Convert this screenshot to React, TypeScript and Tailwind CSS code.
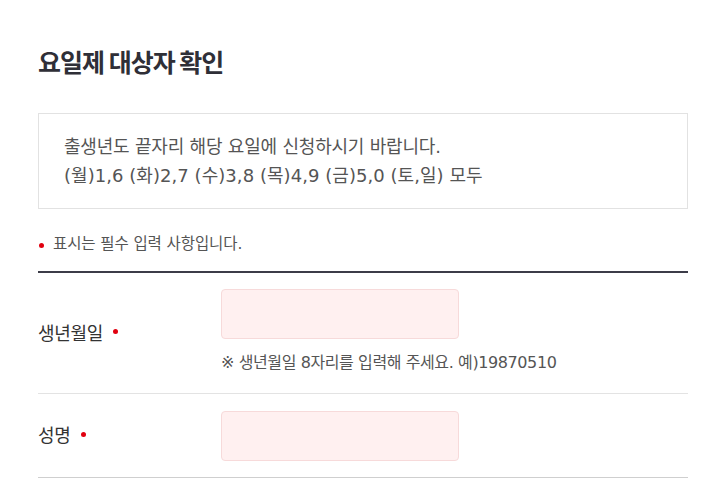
import React from "react";

const Dot = ({ className = "" }: { className?: string }) => (
  <span className={`inline-block w-[5px] h-[5px] rounded-full bg-[#e1000f] ${className}`} />
);

export default function App() {
  return (
    <div
      className="w-[708px] h-[479px] bg-white overflow-hidden"
      style={{ fontFamily: '"DejaVu Sans", "Noto Sans CJK KR", sans-serif' }}
    >
      <div className="ml-[38px] w-[650px] pt-[43px]">
        <h1
          className="text-[25px] leading-[36px] font-bold text-[#2f2f37] tracking-[-1px]"
          style={{ fontFamily: '"Noto Sans CJK KR", sans-serif' }}
        >
          요일제 대상자 확인
        </h1>

        <div className="mt-[34px] border border-[#e2e2e2] h-[96px] px-[25px] pt-[18px] text-[18px] leading-[29px] text-[#555]">
          <div className="tracking-[-0.2px]">출생년도 끝자리 해당 요일에 신청하시기 바랍니다.</div>
          <div className="tracking-[0.05px]">(월)1,6 (화)2,7 (수)3,8 (목)4,9 (금)5,0 (토,일) 모두</div>
        </div>

        <div className="mt-[25px] flex items-center h-[22px] text-[15.5px] text-[#555] tracking-[-0.1px]">
          <Dot className="ml-[1px] mr-[9px]" />
          <span>표시는 필수 입력 사항입니다.</span>
        </div>

        <div className="mt-[15px] h-[2px] bg-[#3c3c48]" />

        <div className="flex items-center border-b border-[#e3e3e3]">
          <div className="w-[183px] flex items-center text-[18px] text-[#333] tracking-[-0.3px]">
            <span>생년월일</span>
            <Dot className="ml-[10px] -mt-[3px]" />
          </div>
          <div className="pt-[16px] pb-[18px]">
            <div className="w-[238px] h-[50px] rounded-[4px] bg-[#fff0f0] border border-[#f7dada]" />
            <div className="mt-[12px] text-[16px] leading-[24px] text-[#555] tracking-[-0.4px]">
              ※ 생년월일 8자리를 입력해 주세요. 예)19870510
            </div>
          </div>
        </div>

        <div className="flex items-center border-b border-[#cfcfcf]">
          <div className="w-[183px] flex items-center text-[18px] text-[#333] tracking-[-0.3px]">
            <span>성명</span>
            <Dot className="ml-[10px] -mt-[3px]" />
          </div>
          <div className="pt-[17px] pb-[16px]">
            <div className="w-[238px] h-[50px] rounded-[4px] bg-[#fff0f0] border border-[#f7dada]" />
          </div>
        </div>
      </div>
    </div>
  );
}
